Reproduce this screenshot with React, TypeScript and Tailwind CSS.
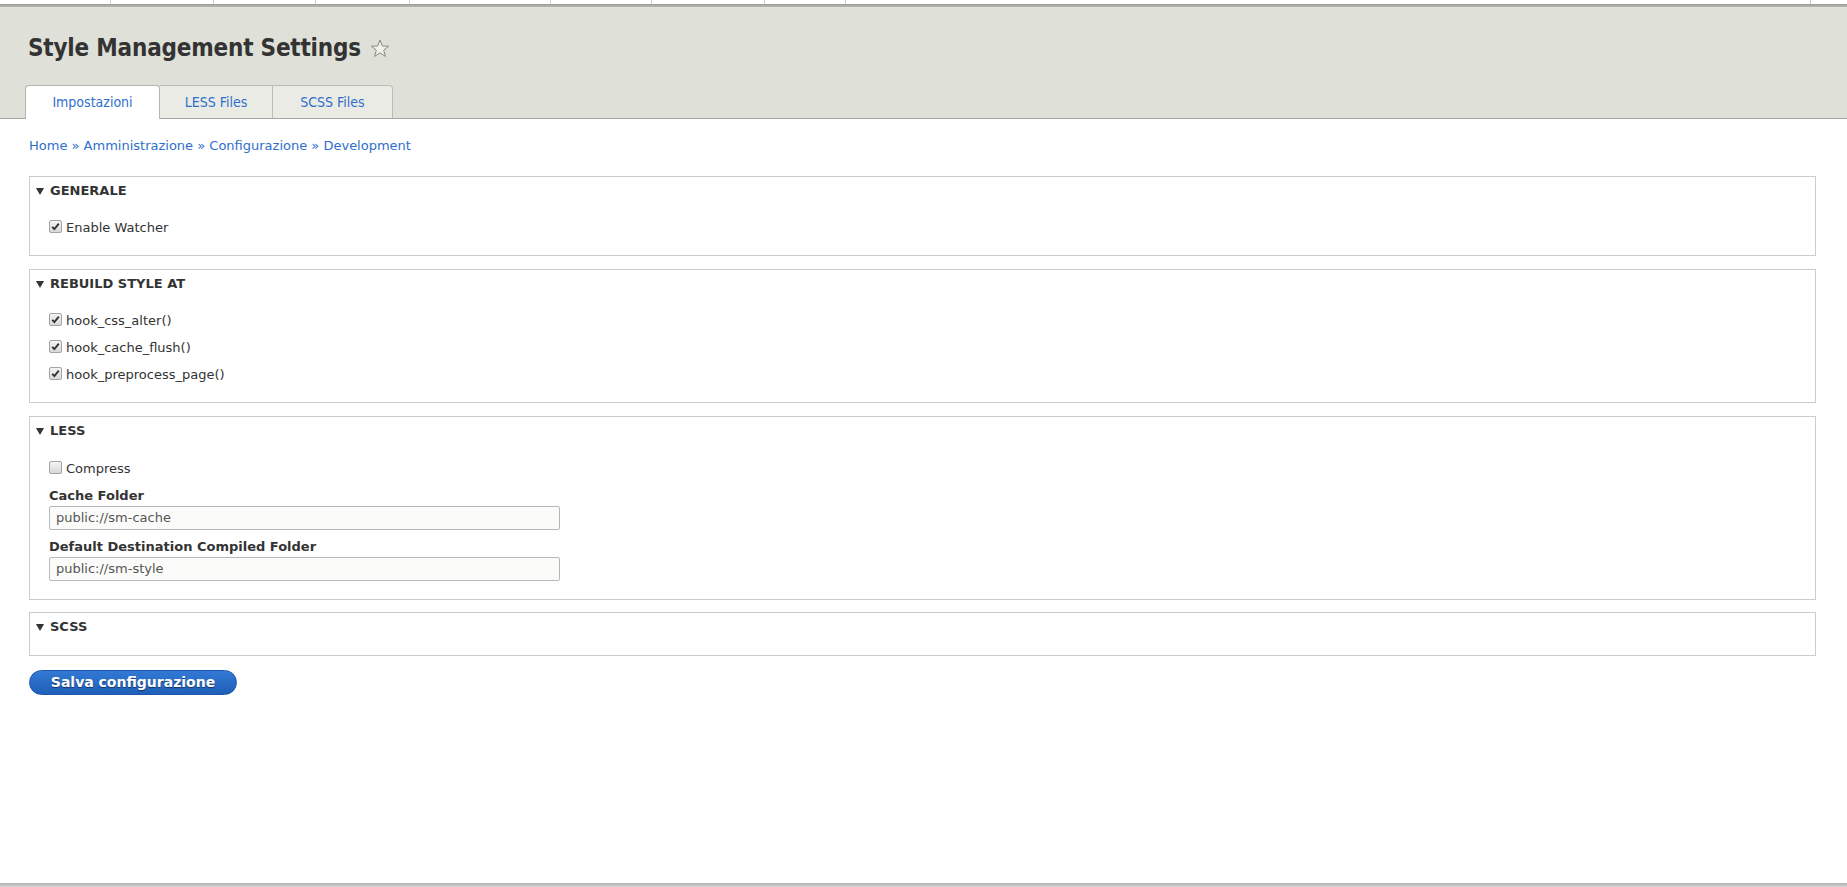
import React from "react";

const LINES = [110, 213, 315, 409, 550, 651, 764, 845];

function Check({ checked }: { checked: boolean }) {
  return (
    <span className="-mt-[3px] inline-flex h-[13px] w-[13px] shrink-0 items-center justify-center rounded-[2px] border border-[#a3a3a3] bg-gradient-to-b from-[#f4f4f4] to-[#d9d9d9]">
      {checked && (
        <svg width="9" height="9" viewBox="0 0 9 9">
          <path d="M1.2 4.8 L3.4 7 L7.8 1.6" fill="none" stroke="#333" strokeWidth="1.9" />
        </svg>
      )}
    </span>
  );
}

function Legend({ title }: { title: string }) {
  return (
    <div className="ml-[6px] flex h-[18px] items-center gap-[6px] text-[13px] font-bold uppercase leading-[18px] text-[#333]">
      <svg width="8" height="7" viewBox="0 0 8 7">
        <path d="M0 0 H8 L4 7 Z" fill="#333" />
      </svg>
      <span>{title}</span>
    </div>
  );
}

function CheckRow({ label, checked }: { label: string; checked: boolean }) {
  return (
    <div className="flex h-[18px] items-center gap-[4px] text-[13px] text-[#333]">
      <Check checked={checked} />
      <span>{label}</span>
    </div>
  );
}

function TextField({ label, value }: { label: string; value: string }) {
  return (
    <div>
      <div className="h-[18px] text-[13px] font-bold leading-[18px] text-[#333]">{label}</div>
      <div className="mt-[1px] flex h-[24px] w-[511px] items-center rounded-[2px] border border-[#b8b8b8] bg-[#fbfbfa] px-[6px] text-[13px] text-[#555]">
        {value}
      </div>
    </div>
  );
}

export default function App() {
  return (
    <div className="flex h-[887px] flex-col overflow-hidden bg-white" style={{ fontFamily: '"DejaVu Sans", Verdana, sans-serif' }}>
      {/* leftover toolbar strip */}
      <div className="relative h-[4px] bg-white">
        {LINES.map((x) => (
          <span key={x} className="absolute top-0 h-[4px] w-px bg-[#d0d0d0]" style={{ left: x }} />
        ))}
        <span className="absolute right-[36px] top-0 h-[4px] w-px bg-[#c8c8c8]" />
      </div>
      <div className="h-[3px] bg-gradient-to-b from-[#9a9a9a] to-[#b9b9b4]" />

      <div className="border-b border-[#a6a6a6] bg-[#dfe0d7] pl-[25px]">
        <div className="flex items-center gap-[9px] pl-[3px] pt-[26px]">
          <h1
            className="text-[24px] font-bold leading-[30px] tracking-[-0.2px] text-[#333]"
            style={{ fontFamily: '"DejaVu Sans Condensed", "DejaVu Sans", sans-serif', fontStretch: "condensed" }}
          >
            Style Management Settings
          </h1>
          <svg width="20" height="19" viewBox="0 0 20 19" className="mt-[1px]">
            <path
              d="M10 1 L12.4 7 L18.6 7.2 L13.7 11.1 L15.4 17.4 L10 13.8 L4.6 17.4 L6.3 11.1 L1.4 7.2 L7.6 7 Z"
              fill="#f1f1ec"
              stroke="#8a8a80"
              strokeWidth="1"
            />
          </svg>
        </div>
        <div
          className="mt-[22px] flex h-[33px] items-end text-[14px] text-[#2f6fcb]"
          style={{ fontFamily: '"DejaVu Sans Condensed", "DejaVu Sans", sans-serif', fontStretch: "condensed" }}
        >
          <div className="relative top-px flex h-[34px] w-[135px] items-center justify-center rounded-t-[4px] border border-b-0 border-[#b5b5af] bg-white">
            Impostazioni
          </div>
          <div className="flex h-[33px] w-[113px] items-center justify-center border-r border-t border-[#bdbdb7] bg-[#ebebe6]">
            LESS Files
          </div>
          <div className="flex h-[33px] w-[120px] items-center justify-center rounded-tr-[4px] border-r border-t border-[#bdbdb7] bg-[#ebebe6]">
            SCSS Files
          </div>
        </div>
      </div>

      <div className="flex-1 pl-[29px] pr-[31px]">
        <div className="mt-[18px] h-[18px] text-[13px] leading-[18px] text-[#2f6fcb]">
          Home » Amministrazione » Configurazione » Development
        </div>

        <div className="mt-[21px] border border-[#ccc] pb-[18px] pt-[5px]">
          <Legend title="Generale" />
          <div className="mt-[19px] pl-[19px]">
            <CheckRow label="Enable Watcher" checked />
          </div>
        </div>

        <div className="mt-[13px] border border-[#ccc] pb-[18px] pt-[5px]">
          <Legend title="Rebuild style at" />
          <div className="mt-[19px] flex flex-col gap-[9px] pl-[19px]">
            <CheckRow label="hook_css_alter()" checked />
            <CheckRow label="hook_cache_flush()" checked />
            <CheckRow label="hook_preprocess_page()" checked />
          </div>
        </div>

        <div className="mt-[13px] border border-[#ccc] pb-[18px] pt-[5px]">
          <Legend title="Less" />
          <div className="mt-[20px] pl-[19px]">
            <CheckRow label="Compress" checked={false} />
            <div className="mt-[9px]">
              <TextField label="Cache Folder" value="public://sm-cache" />
            </div>
            <div className="mt-[8px]">
              <TextField label="Default Destination Compiled Folder" value="public://sm-style" />
            </div>
          </div>
        </div>

        <div className="mt-[12px] border border-[#ccc] pb-[19px] pt-[5px]">
          <Legend title="Scss" />
        </div>

        <button
          type="button"
          className="mt-[14px] h-[25px] w-[208px] rounded-full border border-[#1b57ab] bg-gradient-to-b from-[#3279d3] to-[#1f5fb9] text-[14px] font-bold text-white [text-shadow:0_1px_1px_rgba(0,0,0,0.5)]"
        >
          Salva configurazione
        </button>
      </div>

      <div className="h-[4px] bg-gradient-to-b from-[#b0b0b0] to-[#d6d6d6]" />
    </div>
  );
}
